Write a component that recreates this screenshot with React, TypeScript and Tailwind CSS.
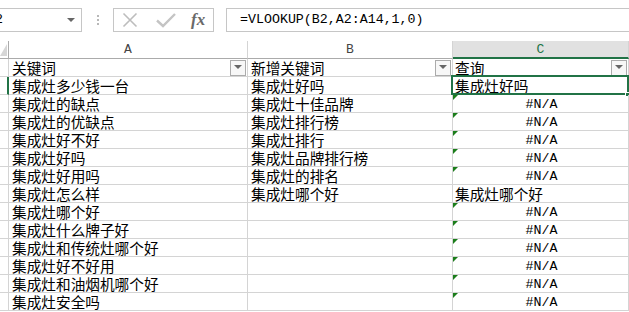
import React from "react";

const colA = [
  "关键词",
  "集成灶多少钱一台",
  "集成灶的缺点",
  "集成灶的优缺点",
  "集成灶好不好",
  "集成灶好吗",
  "集成灶好用吗",
  "集成灶怎么样",
  "集成灶哪个好",
  "集成灶什么牌子好",
  "集成灶和传统灶哪个好",
  "集成灶好不好用",
  "集成灶和油烟机哪个好",
  "集成灶安全吗",
];
const colB = [
  "新增关键词",
  "集成灶好吗",
  "集成灶十佳品牌",
  "集成灶排行榜",
  "集成灶排行",
  "集成灶品牌排行榜",
  "集成灶的排名",
  "集成灶哪个好",
  "",
  "",
  "",
  "",
  "",
  "",
];
const colC = [
  "查询",
  "集成灶好吗",
  "#N/A",
  "#N/A",
  "#N/A",
  "#N/A",
  "#N/A",
  "集成灶哪个好",
  "#N/A",
  "#N/A",
  "#N/A",
  "#N/A",
  "#N/A",
  "#N/A",
];

const cjk = { fontFamily: '"Noto Sans CJK SC", "Noto Sans", sans-serif' };
const mono = { fontFamily: '"Liberation Mono", "DejaVu Sans Mono", monospace' };

function FilterBtn() {
  return (
    <div className="w-[16px] h-[16px] border border-[#ababab] bg-[#f7f7f7] flex items-center justify-center shrink-0">
      <svg width="8" height="5" viewBox="0 0 8 5">
        <path d="M0 0 L8 0 L4 4 Z" fill="#666" />
      </svg>
    </div>
  );
}

function ErrTri() {
  return (
    <svg className="absolute left-0 top-0" width="5" height="5" viewBox="0 0 5 5">
      <path d="M0 0 L5 0 L0 5 Z" fill="#1b7d1b" />
    </svg>
  );
}

export default function App() {
  return (
    <div className="w-[629px] h-[312px] overflow-hidden bg-white text-black">
      {/* Formula bar */}
      <div className="h-[41px] flex items-start pt-[8px]">
        <div className="h-[24px] w-[100px] ml-[-18px] border border-[#c6c6c6] flex items-center pl-[4px] pr-[6px] shrink-0">
          <span className="text-[13.3px] leading-[16px] flex-1" style={mono}>
            C2
          </span>
          <svg width="8" height="5" viewBox="0 0 8 5">
            <path d="M0 0 L8 0 L4 4 Z" fill="#666" />
          </svg>
        </div>
        <div className="w-[31px] h-[24px] flex flex-col items-center justify-center gap-[2px] shrink-0">
          <div className="w-[2px] h-[2px] bg-[#b8b8b8]" />
          <div className="w-[2px] h-[2px] bg-[#b8b8b8]" />
          <div className="w-[2px] h-[2px] bg-[#b8b8b8]" />
        </div>
        <div className="h-[24px] w-[101px] border border-[#c6c6c6] flex items-center shrink-0">
          <svg className="ml-[8px]" width="16" height="16" viewBox="0 0 16 16">
            <path d="M1.5 1.5 L14.5 14.5 M14.5 1.5 L1.5 14.5" stroke="#bdbdbd" strokeWidth="1.6" fill="none" />
          </svg>
          <svg className="ml-[18px]" width="20" height="16" viewBox="0 0 20 16">
            <path d="M1 8.5 L7 14 L19 2" stroke="#c4c4c4" strokeWidth="2.4" fill="none" />
          </svg>
          <span
            className="ml-[15px] text-[17px] italic font-bold text-[#6a6a6a] leading-[20px]"
            style={{ fontFamily: '"Liberation Serif", "DejaVu Serif", serif' }}
          >
            fx
          </span>
        </div>
        <div className="h-[24px] flex-1 ml-[12px] mr-[-4px] border border-[#c6c6c6] flex items-center pl-[13px]">
          <span className="text-[13.3px] leading-[16px]" style={mono}>
            =VLOOKUP(B2,A2:A14,1,0)
          </span>
        </div>
      </div>

      {/* Grid */}
      <div className="grid grid-cols-[9px_239px_205px_176px] auto-rows-[18px]">
        {/* column headers */}
        <div className="border-r border-b border-[#ababab] relative bg-white">
          <svg className="absolute right-[1px] bottom-[2px]" width="7" height="12" viewBox="0 0 7 12">
            <path d="M7 0 L7 12 L0 12 Z" fill="#d6d6d6" />
          </svg>
        </div>
        <div className="border-r border-b border-[#d4d4d4] border-b-[#ababab] flex items-center justify-center text-[13px] leading-[16px] text-[#444]" style={mono}>
          A
        </div>
        <div className="border-r border-b border-[#d4d4d4] border-b-[#ababab] flex items-center justify-center text-[13px] leading-[16px] text-[#444]" style={mono}>
          B
        </div>
        <div className="border-r border-[#d4d4d4] border-b-2 border-b-[#217346] bg-[#e1e1e1] flex items-center justify-center text-[13px] leading-[15px] text-[#217346]" style={mono}>
          C
        </div>

        {colA.map((a, i) => {
          const b = colB[i];
          const c = colC[i];
          const isNA = c === "#N/A";
          return (
            <React.Fragment key={i}>
              <div
                className={
                  i === 1
                    ? "border-r-2 border-b border-r-[#217346] border-b-[#d4d4d4] bg-white"
                    : "border-r border-b border-[#d4d4d4] bg-white"
                }
              />
              <div
                className="border-r border-b border-[#d4d4d4] flex items-center pl-[3px] pr-[1px] text-[14.67px] leading-[17px] whitespace-nowrap overflow-hidden"
                style={cjk}
              >
                <span className="flex-1">{a}</span>
                {i === 0 && <FilterBtn />}
              </div>
              <div
                className="border-r border-b border-[#d4d4d4] flex items-center pl-[3px] pr-[1px] text-[14.67px] leading-[17px] whitespace-nowrap overflow-hidden"
                style={cjk}
              >
                <span className="flex-1">{b}</span>
                {i === 0 && <FilterBtn />}
              </div>
              <div
                className={
                  "relative border-r border-b border-[#d4d4d4] flex items-center text-[14.67px] leading-[17px] whitespace-nowrap " +
                  (isNA ? "justify-center" : "pl-[2px] pr-[1px]")
                }
                style={isNA ? mono : cjk}
              >
                {isNA ? (
                  <>
                    <ErrTri />
                    <span className="text-[13.3px] leading-[17px] pt-[2px] ml-[2px]">#N/A</span>
                  </>
                ) : (
                  <>
                    <span className="flex-1">{c}</span>
                    {i === 0 && <FilterBtn />}
                  </>
                )}
                {i === 1 && (
                  <>
                    <div className="absolute left-[-2px] top-[-2px] right-[-1px] bottom-[-1px] border-2 border-[#217346] pointer-events-none" />
                    <div className="absolute right-[-2px] bottom-[-3px] w-[5px] h-[5px] bg-[#217346] border border-white" />
                  </>
                )}
              </div>
            </React.Fragment>
          );
        })}
      </div>
    </div>
  );
}
